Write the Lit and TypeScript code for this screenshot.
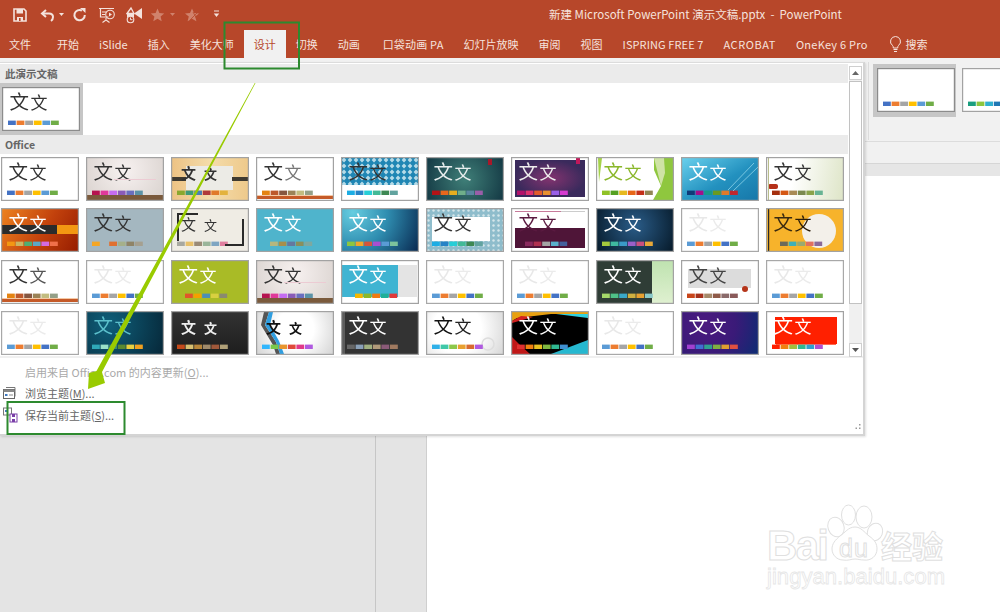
import { css, html, svg, LitElement, type SVGTemplateResult } from 'lit'
import { customElement } from 'lit/decorators.js'

interface Theme {
  bg: string
  t1?: string
  t2?: string
  sw: string[]
  sx?: number
  decor?: SVGTemplateResult
  back?: SVGTemplateResult
  small?: boolean
  bold?: boolean
  noText?: boolean
  edge?: string
}

const OFFICE = ['#4472c4', '#ed7d31', '#a5a5a5', '#ffc000', '#5b9bd5', '#70ad47']
const BLANK_SW = ['#5b9bd5', '#ed7d31', '#a5a5a5', '#ffc000', '#4472c4', '#70ad47']
const RETRO = ['#e48312', '#bd582c', '#865640', '#9b8357', '#c2bc80', '#94a088']
const BLUE_GREEN = ['#1cade4', '#2683c6', '#27ced7', '#42ba97', '#3e8853', '#62a39f']
const WOOD = ['#b5134f', '#e0399a', '#c56cf0', '#8a5bb8', '#6a6fbf', '#5b93a8']

const blank: Theme = { bg: '#fff', t1: '#e8e8e8', t2: '#ebebeb', sw: BLANK_SW, edge: '#a8a8a8' }

const woodDecor = svg`
  <rect x="28" y="22" width="42" height="1" fill="#eccbd3" />
  <rect x="1" y="38" width="76" height="5" fill="#7a5a3c" />`

const retroDecor = svg`
  <rect x="1" y="38" width="76" height="1" fill="#f5c9a5" />
  <rect x="1" y="39" width="76" height="3" fill="#c55a28" />`

const themes: Theme[] = [
  { bg: '#fff', sw: OFFICE },
  { bg: 'radial-gradient(circle at 50% 30%, #f7f1f0, #d8d1cd)', sw: WOOD, decor: woodDecor },
  {
    bg: 'linear-gradient(90deg, #edc283, #f4dcab 50%, #eec98a)',
    sw: ['#8aa82e', '#3f9a78', '#4a7fb5', '#b03a3a', '#e07a2a', '#e3b23c'],
    small: true,
    bold: true,
    back: svg`
      <rect x="15" y="9" width="47" height="24" fill="#ecebe6" />
      <rect x="1" y="20" width="14" height="4" fill="#3f3a30" />
      <rect x="61" y="20" width="16" height="4" fill="#3f3a30" />`,
  },
  { bg: '#fff', t2: '#777', sw: RETRO, decor: retroDecor },
  {
    bg: '#fff',
    sw: BLUE_GREEN,
    back: svg`
      <defs>
        <pattern id="dia" width="6" height="6" patternUnits="userSpaceOnUse">
          <rect width="6" height="6" fill="#1f86b4" />
          <path d="M3 .6 5.400 3 3 5.400 .6 3z" fill="#b5dbe8" />
        </pattern>
      </defs>
      <rect x="1" y="1" width="76" height="27" fill="url(#dia)" />`,
  },
  {
    bg: 'radial-gradient(circle at 50% 50%, #3f7f78, #123642)',
    t1: '#e8eeee',
    t2: '#e8eeee',
    sw: ['#b31217', '#e8671c', '#e6ad1f', '#6fae8a', '#5a86a0', '#9a5ea8'],
    decor: svg`<rect x="62" y="2" width="4" height="6" fill="#a8182a" />`,
  },
  {
    bg: '#fff',
    t1: '#eee',
    t2: '#eee',
    sw: ['#b3126b', '#e0336f', '#e35d2b', '#e8902f', '#9a5fe8', '#d63ad0'],
    back: svg`
      <defs>
        <radialGradient id="pur"><stop offset="0" stop-color="#83336f" /><stop offset="1" stop-color="#3a2a5c" /></radialGradient>
      </defs>
      <rect x="4" y="3" width="70" height="37" fill="url(#pur)" />
      <rect x="65" y="1" width="4" height="6" fill="#c2185b" />`,
  },
  {
    bg: '#fff',
    t1: '#8ab72a',
    t2: '#8ab72a',
    small: false,
    sw: ['#90c226', '#54a021', '#e6b91e', '#e76618', '#c42f1a', '#918655'],
    back: svg`
      <path d="M2 1h4l-3 24z" fill="#a5d24a" />
      <path d="M58 1h19v42H57l8-14-7-16z" fill="#8fc73e" />
      <path d="M58 1h10l1 15-4 13z" fill="#cfe3a5" />`,
  },
  {
    bg: 'linear-gradient(150deg, #6bd2ee, #2391bf 55%, #1676a8)',
    t1: '#fff',
    t2: '#fff',
    sw: ['#0f3b78', '#a3108a', '#159a8a', '#6a9a1f', '#e07a2a', '#c0272d'],
    decor: svg`<path d="M47 33 73 6M52 34 77 10" stroke="#8fd4ea" stroke-width=".8" />`,
  },
  {
    bg: 'linear-gradient(100deg, #fff 35%, #dde4c6)',
    sw: ['#a5300f', '#d55816', '#a98b56', '#7b8a4f', '#8aa34a', '#68b393'],
    decor: svg`
      <rect x="2" y="27" width="10" height="5" rx="2" fill="#b5301a" />
      <rect x="2" y="1" width="1" height="42" fill="#b9bd8a" />`,
  },

  {
    bg: 'linear-gradient(120deg, #ee8420, #c2410c 55%, #951c00)',
    t1: '#fff',
    t2: '#fff',
    sw: ['#f39712', '#c8b562', '#4fae72', '#5ba8c6', '#d36be0', '#f0704a'],
    back: svg`
      <rect x="1" y="17" width="55" height="9" fill="#2b2b2b" />
      <rect x="56" y="17" width="21" height="9" fill="#f39712" />`,
  },
  { bg: '#a4b7c0', sw: ['#f5a623', '#a4b7c0', '#e07030', '#a5b08a', '#8f8467', '#a5a090'] },
  {
    bg: '#efece4',
    sw: ['#a8a8a0', '#e8c06a', '#9a8a76', '#9ab59a', '#7fa6c2', '#e07f9f'],
    small: true,
    decor: svg`
      <path d="M7 33V6h20M54 37h18V11" fill="none" stroke="#2a2a2a" stroke-width="2" />`,
  },
  {
    bg: '#4fb4cc',
    t1: '#fff',
    t2: '#fff',
    sw: ['#b5b77e', '#a78f4a', '#6478a0', '#8a8f5c', '#7ea8a0'],
    sx: 14,
  },
  {
    bg: 'radial-gradient(circle at 15% 10%, #66cde0, #2f8db0 45%, #07264e)',
    t1: '#fff',
    t2: '#fff',
    sw: ['#8dc63f', '#f2a52a', '#d4553a', '#a84fd0', '#5a9bd5', '#7cc29c'],
  },
  {
    bg: '#8fbdcc',
    sw: BLUE_GREEN,
    back: svg`
      <defs>
        <pattern id="flo" width="5" height="5" patternUnits="userSpaceOnUse">
          <circle cx="2.500" cy="2.500" r="1.200" fill="#d5e6ea" />
        </pattern>
      </defs>
      <rect x="1" y="1" width="76" height="42" fill="url(#flo)" />
      <rect x="6" y="9" width="58" height="24" fill="#fff" />`,
  },
  {
    bg: '#fff',
    t1: '#5a1a40',
    t2: '#5a1a40',
    sw: ['#8a2a5e', '#b03050', '#a5a5a5', '#5ab0cc', '#44609c'],
    sx: 14,
    back: svg`
      <rect x="4" y="3" width="46" height="1" fill="#c77a9a" />
      <rect x="50" y="3" width="24" height="1" fill="#ccc" />
      <rect x="4" y="20" width="70" height="20" fill="#4f1538" />`,
  },
  {
    bg: 'radial-gradient(circle at 50% 40%, #2a5c88, #051827)',
    t1: '#fff',
    t2: '#fff',
    sw: ['#a5c93d', '#3fb8a0', '#3a9ac8', '#9a5fc8', '#c94f7f', '#e8a838'],
  },
  blank,
  {
    bg: '#f7b32b',
    t1: '#3a2a10',
    t2: '#2a1c08',
    sw: ['#6a6a5a', '#3fb0b8', '#9aaa70', '#e07060', '#8a6a9a'],
    sx: 14,
    back: svg`
      <circle cx="53" cy="23" r="17" fill="#f3f0ea" />
      <rect x="2" y="1" width="1.200" height="42" fill="#2a2a2a" />`,
  },

  { bg: '#fff', t2: '#555', sw: RETRO, decor: retroDecor },
  blank,
  {
    bg: '#a9bb26',
    t1: '#fff',
    t2: '#fff',
    sw: ['#e0552a', '#f5a000', '#4a8fb8', '#d8d040', '#8a8a70'],
    sx: 14,
  },
  { bg: 'radial-gradient(circle at 50% 30%, #f7f1f0, #d8d1cd)', sw: WOOD, decor: woodDecor },
  {
    bg: '#fff',
    t1: '#fff',
    t2: '#fff',
    sw: ['#f5b800', '#8cb82a', '#f07a10', '#20b098', '#e03a3a'],
    sx: 14,
    back: svg`
      <rect x="1" y="5" width="56" height="32" fill="#3fb4d2" />
      <rect x="57" y="5" width="19" height="32" fill="#e4e4e4" />`,
  },
  blank,
  blank,
  {
    bg: '#2f3d36',
    t1: '#fff',
    t2: '#fff',
    sw: ['#a5d86a', '#4fc088', '#3aa8c8', '#d0b040', '#e8a030', '#8ac8c8'],
    back: svg`
      <defs>
        <linearGradient id="grn" x2="0" y2="1"><stop offset="0" stop-color="#bfe3b0" /><stop offset="1" stop-color="#dff0d0" /></linearGradient>
      </defs>
      <rect x="56" y="1" width="21" height="42" fill="url(#grn)" />`,
  },
  {
    bg: '#fff',
    t1: '#444',
    t2: '#444',
    sw: ['#c8451a', '#a5301a', '#a58a6a', '#8f5a48', '#8a6a6a', '#8a5a5a'],
    back: svg`
      <rect x="7" y="9" width="63" height="19" fill="#dcdcdc" />
      <circle cx="64" cy="29" r="3" fill="#b5351a" />`,
  },
  blank,

  blank,
  {
    bg: 'radial-gradient(circle at 30% 30%, #0f5f7a, #062637)',
    t1: '#5cc0cc',
    t2: '#5cc0cc',
    sw: ['#2fa8b8', '#9ae0c8', '#3a8a70', '#5a8a30', '#e8d040', '#f0a020'],
  },
  {
    bg: 'linear-gradient(#333, #1d1d1d)',
    t1: '#eee',
    t2: '#eee',
    small: true,
    bold: true,
    sw: ['#c44a1a', '#d8c070', '#b8863a', '#a08a6a', '#a0583a', '#b0a078'],
  },
  {
    bg: 'radial-gradient(circle at 50% 40%, #fff 40%, #d2d2d2)',
    t1: '#111',
    t2: '#111',
    small: true,
    bold: true,
    sw: ['#31b6fd', '#7ac94a', '#e8952e', '#e04a3a', '#e03a8a', '#b05ae0'],
    back: svg`
      <path d="M8 1 5 14l12 20 3 9h4l-4-12L9 14l4-13z" fill="#555" />
      <path d="M13 1 9 14l11 17 4 12h4l-5-13-9-16 3-13z" fill="#2f9ee0" />`,
  },
  {
    bg: '#333',
    t1: '#fff',
    t2: '#fff',
    sw: ['#666', '#8aa0b8', '#a0b080', '#b09a7a', '#8a5a78', '#a07a60'],
    back: svg`<rect x="1" y="1" width="3" height="42" fill="#5c5c5c" />`,
  },
  {
    bg: 'radial-gradient(circle at 40% 40%, #fff 45%, #d5d5d5)',
    t1: '#111',
    t2: '#222',
    sw: ['#2fb0e8', '#3fc8a8', '#8cc84a', '#e8a030', '#d86a30', '#b05ae0'],
    back: svg`<circle cx="62" cy="33" r="6" fill="none" stroke="#ddd" stroke-width="1.500" />`,
  },
  {
    bg: '#000',
    t1: '#fff',
    t2: '#fff',
    sw: ['#e03030', '#f08010', '#e8c020', '#80b840', '#30b890', '#4090d0'],
    back: svg`
      <path d="M1 1h76v2L40 3 6 7 1 10z" fill="#e8a010" />
      <path d="M1 10 10 5l12 1L1 12z" fill="#d02020" />
      <path d="M1 26l8 8 10 9H1z" fill="#c01818" />
      <path d="M40 43l37-14v14z" fill="#26b8d0" />
      <path d="M45 3h32v4z" fill="#30d0e0" />`,
  },
  blank,
  {
    bg: 'radial-gradient(circle at 30% 30%, #4c1a80, #3a1a78 50%, #0a2c72)',
    t1: '#fff',
    t2: '#fff',
    sw: ['#a040d0', '#4070d0', '#30a090', '#80b040', '#e0a030', '#e05040'],
  },
  {
    bg: '#fff',
    t1: '#fff',
    t2: '#fff',
    sw: ['#ff2000', '#f08010', '#a0c040', '#30b890', '#30a0d0', '#b050d0'],
    back: svg`
      <rect x="9" y="6" width="62" height="27" fill="#ff2000" />
      <rect x="10" y="33" width="60" height="1" fill="#ff6a50" />`,
  },
]

const selectedTheme: Theme = { bg: '#fff', sw: OFFICE, edge: '#8c8c8c' }
const ribbonThemes: Theme[] = [
  { bg: '#fff', sw: OFFICE, noText: true, edge: '#8c8c8c' },
  { bg: '#fff', sw: ['#1a9e7f', '#8cc63f', '#2fb0d0', '#1f77b4', '#a5a5a5', '#70ad47'], noText: true },
]

const tabs: { label: string; cls?: string; track?: number }[] = [
  { label: '文件', cls: 'file' },
  { label: '开始' },
  { label: 'iSlide' },
  { label: '插入' },
  { label: '美化大师' },
  { label: '设计', cls: 'active' },
  { label: '切换' },
  { label: '动画', cls: 'wide' },
  { label: '口袋动画 PA', track: 0.2 },
  { label: '幻灯片放映' },
  { label: '审阅' },
  { label: '视图' },
  { label: 'ISPRING FREE 7', track: 0.1 },
  { label: 'ACROBAT', track: 0.55 },
  { label: 'OneKey 6 Pro', track: 0.25, cls: 'wide' },
]

function thumb(t: Theme) {
  const size1 = t.small ? 15 : 19.5
  const size2 = t.small ? 13 : 17
  const x1 = t.small ? 10 : 7.5
  const x2 = t.small ? 33 : 28.5
  return html`
    <div class="thumb" style="background: ${t.bg}">
      <svg width="78" height="44" viewBox="0 0 78 44">
        ${t.back}
        ${t.noText
          ? null
          : svg`
            <text class="glyph ${t.bold ? 'bold' : ''}" x=${x1} y="22" font-size=${size1} fill=${t.t1 ?? '#333'}>文</text>
            <text class="glyph ${t.bold ? 'bold' : ''}" x=${x2} y="22" font-size=${size2} fill=${t.t2 ?? '#333'}>文</text>`}
        ${t.sw.map(
          (c, i) =>
            svg`<rect x=${(t.sx ?? 6) + i * 8.6} y="33.6" width="7.8" height="4.4" fill=${c} />`,
        )}
        ${t.decor}
        <rect x=".6" y=".6" width="76.8" height="42.8" fill="none" stroke=${t.edge ?? '#a2a2a2'} stroke-width="1.2" />
      </svg>
    </div>
  `
}

@customElement('app-root')
export class AppRoot extends LitElement {
  static styles = css`
    :host {
      display: block;
      position: relative;
      width: 1000px;
      height: 612px;
      overflow: hidden;
      background: #e4e4e4;
      font-family: 'Noto Sans CJK SC', 'Liberation Sans', sans-serif;
    }

    .titlebar {
      display: flex;
      align-items: center;
      height: 30px;
      background: #b7472a;
      color: #f6e3dd;
    }

    .qat {
      display: flex;
      align-items: center;
      width: 549px;
      padding-left: 12px;
      box-sizing: border-box;
    }

    .qat svg {
      display: block;
      flex: none;
    }

    .title {
      padding-bottom: 2px;
      font-size: 11.5px;
      white-space: pre;
    }

    .tabs {
      display: flex;
      align-items: stretch;
      height: 28px;
      background: #b7472a;
      color: #f6e3dd;
      font-size: 11px;
    }

    .tab {
      display: flex;
      align-items: center;
      padding: 0 10px;
      white-space: pre;
    }

    .tab.file {
      margin-left: -1px;
      margin-right: 6px;
    }

    .tab.wide {
      margin-right: 3px;
    }

    .tab.active {
      background: #f1f1f1;
      color: #b7472a;
    }

    .search {
      display: flex;
      align-items: center;
      gap: 4px;
      padding-left: 8px;
    }

    .ribbon {
      display: flex;
      justify-content: flex-end;
      height: 84px;
      box-sizing: border-box;
      background: #f1f1f1;
      border-bottom: 1px solid #dcdcdc;
    }

    .ribbon-gallery {
      display: flex;
      width: 132px;
      height: 78px;
      margin-top: 4px;
      padding-left: 4px;
      box-sizing: border-box;
      overflow: hidden;
      gap: 6px;
      border-left: 1px solid #dcdcdc;
    }

    .ribbon-gallery .sel {
      width: 83px;
      height: 53px;
      margin-top: 2px;
      padding: 4px 0 0 4px;
      box-sizing: border-box;
      flex: none;
      background: #c6c6c6;
    }

    .ribbon-gallery .next {
      margin-top: 6px;
      flex: none;
    }

    .band {
      height: 22px;
      box-sizing: border-box;
      background: #f1f1f1;
      border-bottom: 1px solid #d6d6d6;
    }

    .ruler {
      height: 12px;
      background: #e6e6e6;
    }

    .workspace {
      display: flex;
      height: 436px;
    }

    .pane-left {
      width: 376px;
      box-sizing: border-box;
      border-right: 1px solid #c6c6c6;
    }

    .pane-mid {
      width: 51px;
      box-sizing: border-box;
      border-right: 1px solid #cfcfcf;
    }

    .pane-right {
      flex: 1;
      background: #fff;
    }

    .menu {
      position: absolute;
      left: 0;
      top: 62px;
      width: 865px;
      height: 374px;
      box-sizing: border-box;
      padding-top: 1px;
      display: flex;
      flex-direction: column;
      background: #fff;
      border-top: 1px solid #dcdcdc;
      border-right: 2px solid #d4d4d4;
      border-bottom: 2px solid #d4d4d4;
      box-shadow: 1px 1px 2px rgba(0, 0, 0, 0.12);
    }

    .gallery {
      display: flex;
      height: 294px;
      flex: none;
      border-bottom: 2px solid #f0f0f0;
      box-sizing: border-box;
    }

    .list {
      width: 848px;
    }

    .section {
      height: 19px;
      padding-left: 5px;
      background: #ebebeb;
      color: #666;
      font-size: 10.5px;
      font-weight: 700;
      line-height: 19px;
    }

    .current {
      height: 52px;
    }

    .current .sel {
      width: 83px;
      height: 52px;
      padding: 4px 0 0 2px;
      box-sizing: border-box;
      background: #c6c6c6;
    }

    .grid {
      display: grid;
      grid-template-columns: repeat(10, 78px);
      column-gap: 7px;
      row-gap: 7.33px;
      padding: 3px 0 0 1px;
    }

    .thumb {
      width: 78px;
      height: 44px;
    }

    .thumb svg {
      display: block;
      filter: blur(0.3px);
    }

    .glyph {
      font-family: 'Noto Sans CJK SC', sans-serif;
      font-weight: 400;
    }

    .glyph.bold {
      font-weight: 700;
    }

    .scrollbar {
      display: flex;
      flex-direction: column;
      width: 13px;
      margin: 2px 0 0 1px;
      background: #f0f0f0;
      box-sizing: border-box;
      height: 291px;
    }

    .sb-btn {
      display: flex;
      align-items: center;
      justify-content: center;
      flex: none;
      height: 14px;
      box-sizing: border-box;
      background: #fff;
      border: 1px solid #cfcfcf;
    }

    .sb-thumb {
      height: 223px;
      flex: none;
      margin-top: 1px;
      background: #fff;
      box-sizing: border-box;
      border: 1px solid #c2c2c2;
    }

    .sb-track {
      flex: 1;
    }

    .footer {
      flex: 1;
      position: relative;
      padding-top: 3px;
    }

    .row {
      display: flex;
      align-items: center;
      height: 21.5px;
      padding-left: 2px;
      gap: 7px;
      color: #666;
      font-size: 11px;
    }

    .row.off {
      color: #a9a9a9;
    }

    .row svg {
      width: 16px;
      height: 16px;
      flex: none;
    }

    .row .spacer {
      width: 16px;
      flex: none;
    }

    .row u {
      text-underline-offset: 1px;
    }

    .grip {
      position: absolute;
      right: 2px;
      bottom: 2px;
      display: block;
    }

    .overlay {
      position: absolute;
      left: 0;
      top: 0;
      pointer-events: none;
    }

    .wm {
      font-family: 'Liberation Sans', sans-serif;
      fill: #fff;
      stroke: #e0e0e0;
      stroke-width: 1;
    }

    .wm-cjk {
      font-family: 'Noto Sans CJK SC', sans-serif;
      font-weight: 700;
      fill: #fff;
      stroke: #e0e0e0;
      stroke-width: 1;
    }

    .wm-line {
      font-family: 'Liberation Sans', sans-serif;
      fill: #fff;
      stroke: #e6e6e6;
      stroke-width: 0.8;
    }
  `

  private renderQat() {
    const hi = '#f4e2dc'
    const dim = '#d0826c'
    return html`
      <div class="qat">
        <svg width="16" height="16" viewBox="0 0 16 16">
          <path d="M2 2h10l2 2v10H2z" fill="none" stroke=${hi} stroke-width="1.600" />
          <rect x="4.500" y="2" width="6.500" height="4.500" fill=${hi} />
          <rect x="5" y="10" width="6" height="4" fill=${hi} />
          <rect x="7" y="11" width="1.600" height="3" fill="#b7472a" />
        </svg>
        <svg style="margin-left: 12px" width="15" height="16" viewBox="0 0 15 16">
          <path d="M6 3 2 6.500 6 10" fill="none" stroke=${hi} stroke-width="2" />
          <path d="M2.500 6.500H9c3 0 4 2 4 3.500 0 1.500-.6 3-2 4" fill="none" stroke=${hi} stroke-width="2" />
        </svg>
        <svg style="margin-left: 4px" width="6" height="16" viewBox="0 0 6 16">
          <path d="M0 6h5L2.500 9z" fill=${hi} />
        </svg>
        <svg style="margin-left: 7px" width="15" height="16" viewBox="0 0 15 16">
          <path d="M10 3.500A5.200 5.200 0 1 0 12.800 8" fill="none" stroke=${hi} stroke-width="2" />
          <path d="M8 1h5.500v5z" fill=${hi} />
        </svg>
        <svg style="margin-left: 12px" width="16" height="17" viewBox="0 0 16 17">
          <path d="M0 1.500h15M1.500 2v8h8" fill="none" stroke=${hi} stroke-width="1.200" />
          <path d="M7 11v2.500M3.500 15.500 7 13l3.500 2.500" fill="none" stroke=${hi} stroke-width="1.100" />
          <circle cx="11" cy="7.500" r="4.300" fill="none" stroke=${hi} stroke-width="1.100" />
          <path d="M10 5.500v4l3-2z" fill=${hi} />
          <path d="M3 5h4M3 7.500h3" stroke=${hi} />
        </svg>
        <svg style="margin-left: 11px" width="16" height="18" viewBox="0 0 16 18">
          <path d="M8 7.500 16 2v11z" fill=${hi} />
          <path d="M1 7.500 5 2l3 5.500z" fill="none" stroke=${hi} stroke-width="1.300" />
          <path d="M1 8h7v3H1z" fill=${hi} />
          <circle cx="4.500" cy="13.500" r="3.300" fill="#b7472a" stroke=${hi} stroke-width="1.100" />
          <path d="M4.500 11.500v2.200h2" fill="none" stroke=${hi} />
        </svg>
        <svg style="margin-left: 8px" width="15" height="16" viewBox="0 0 15 16">
          <path d="M7.500 1.500 9.400 6l4.800.400-3.600 3.100 1.100 4.700-4.200-2.500-4.200 2.500 1.100-4.700L.8 6.400 5.600 6z" fill=${dim} />
        </svg>
        <svg style="margin-left: 5px" width="6" height="16" viewBox="0 0 6 16">
          <path d="M0 6h5L2.500 9z" fill=${dim} />
        </svg>
        <svg style="margin-left: 8px" width="16" height="16" viewBox="0 0 16 16">
          <path d="M8 1.500 10 6l5 .400-3.800 3.100 1.200 4.700L8 11.700l-4.400 2.500 1.200-4.700L1 6.400 6 6z" fill=${dim} />
          <path d="m9 5 4 7M14 5l-8 8" stroke="#b7472a" stroke-width=".8" />
        </svg>
        <svg style="margin-left: 13px" width="7" height="16" viewBox="0 0 7 16">
          <path d="M1 4h5" stroke=${hi} />
          <path d="M.8 6.500h5.400L3.500 10z" fill=${hi} />
        </svg>
      </div>
    `
  }

  private renderOverlay() {
    return html`
      <svg class="overlay" width="1000" height="612" viewBox="0 0 1000 612">
        <rect x="224.500" y="22.500" width="74.500" height="46" fill="none" stroke="#2d8a2f" stroke-width="2" />
        <rect x="7.500" y="402" width="117" height="32" fill="none" stroke="#2d8a2f" stroke-width="2" />
        <path d="M255.500 83 102 372 105 383 88 389 89 373 96.500 371 254.800 83z" fill="#99cb00" />
        <ellipse cx="836" cy="527" rx="8" ry="10" fill="#fff" stroke="#e0e0e0" transform="rotate(-20 836 527)" />
        <ellipse cx="848.500" cy="515" rx="7" ry="10" fill="#fff" stroke="#e0e0e0" />
        <ellipse cx="864" cy="517" rx="8" ry="11" fill="#fff" stroke="#e0e0e0" />
        <ellipse cx="875" cy="532" rx="7.500" ry="9" fill="#fff" stroke="#e0e0e0" transform="rotate(20 875 532)" />
        <path
          d="M855 527c6 0 9 5 14 9 6 4 8 8 8 13 0 7-6 12-13 11-4 0-6-1-9-1-4 0-7 2-12 1-6 0-11-5-11-11 0-5 3-9 8-13 5-3 8-9 15-9z"
          fill="#fff"
          stroke="#e0e0e0"
        />
        <text class="wm" x="767" y="560" font-size="42" font-weight="700" textLength="62">Bai</text>
        <text class="wm" x="839" y="557" font-size="25" textLength="29">du</text>
        <text class="wm-cjk" x="881" y="558" font-size="31" textLength="62">经验</text>
        <text class="wm-line" x="767" y="584" font-size="22" textLength="178">jingyan.baidu.com</text>
      </svg>
    `
  }

  render() {
    return html`
      <div class="titlebar">
        ${this.renderQat()}
        <div class="title">新建 Microsoft PowerPoint 演示文稿.pptx  -  PowerPoint</div>
      </div>
      <div class="tabs">
        ${tabs.map(
          (t) =>
            html`<div class="tab ${t.cls ?? ''}" style="letter-spacing: ${t.track ?? 0}px">${t.label}</div>`,
        )}
        <div class="search">
          <svg width="13" height="18" viewBox="0 0 13 18">
            <path
              d="M6.500 1.500a5 5 0 0 1 3 9c-.6.600-.8 1.200-.8 2.500H4.300c0-1.300-.2-1.900-.8-2.500a5 5 0 0 1 3-9z"
              fill="none"
              stroke="#f6e3dd"
            />
            <path d="M4.500 14.500h4M5 16.500h3" stroke="#f6e3dd" />
          </svg>
          <span>搜索</span>
        </div>
      </div>
      <div class="ribbon">
        <div class="ribbon-gallery">
          <div class="sel">${thumb(ribbonThemes[0])}</div>
          <div class="next">${thumb(ribbonThemes[1])}</div>
        </div>
      </div>
      <div class="band"></div>
      <div class="ruler"></div>
      <div class="workspace">
        <div class="pane-left"></div>
        <div class="pane-mid"></div>
        <div class="pane-right"></div>
      </div>

      <div class="menu">
        <div class="gallery">
          <div class="list">
            <div class="section">此演示文稿</div>
            <div class="current"><div class="sel">${thumb(selectedTheme)}</div></div>
            <div class="section">Office</div>
            <div class="grid">${themes.map((t) => thumb(t))}</div>
          </div>
          <div class="scrollbar">
            <div class="sb-btn">
              <svg width="7" height="4" viewBox="0 0 7 4"><path d="M3.500 0 7 4H0z" fill="#666" /></svg>
            </div>
            <div class="sb-thumb"></div>
            <div class="sb-track"></div>
            <div class="sb-btn">
              <svg width="7" height="4" viewBox="0 0 7 4"><path d="M0 0h7L3.500 4z" fill="#555" /></svg>
            </div>
          </div>
        </div>
        <div class="footer">
          <div class="row off">
            <span class="spacer"></span><span>启用来自 Office.com 的内容更新(<u>O</u>)...</span>
          </div>
          <div class="row">
            <svg viewBox="0 0 16 16">
              <path d="M4 2.500h9v9" fill="none" stroke="#777" />
              <rect x="1.500" y="4.500" width="11" height="9" fill="#fff" stroke="#666" />
              <rect x="1.500" y="4.500" width="11" height="2.500" fill="#888" />
              <rect x="3" y="9" width="2.500" height="2" fill="#3f78c0" />
              <path d="M7 10h4" stroke="#888" />
            </svg>
            <span>浏览主题(<u>M</u>)...</span>
          </div>
          <div class="row">
            <svg viewBox="0 0 16 16">
              <rect x="1.500" y="1" width="8" height="7" fill="#fff" stroke="#777" />
              <rect x="3" y="3" width="2.500" height="2" fill="#3f78c0" />
              <rect x="8" y="7" width="7" height="8" fill="#fff" stroke="#7a3fa8" />
              <rect x="10" y="7" width="3" height="3" fill="#7a3fa8" />
              <rect x="10" y="12" width="3" height="3" fill="#7a3fa8" />
            </svg>
            <span>保存当前主题(<u>S</u>)...</span>
          </div>
          <svg class="grip" width="8" height="8" viewBox="0 0 8 8">
            <path d="M6 0h1.500v1.500H6zM6 3.500h1.500V5H6zM2.500 3.500H4V5H2.500z" fill="#999" />
          </svg>
        </div>
      </div>

      ${this.renderOverlay()}
    `
  }
}
